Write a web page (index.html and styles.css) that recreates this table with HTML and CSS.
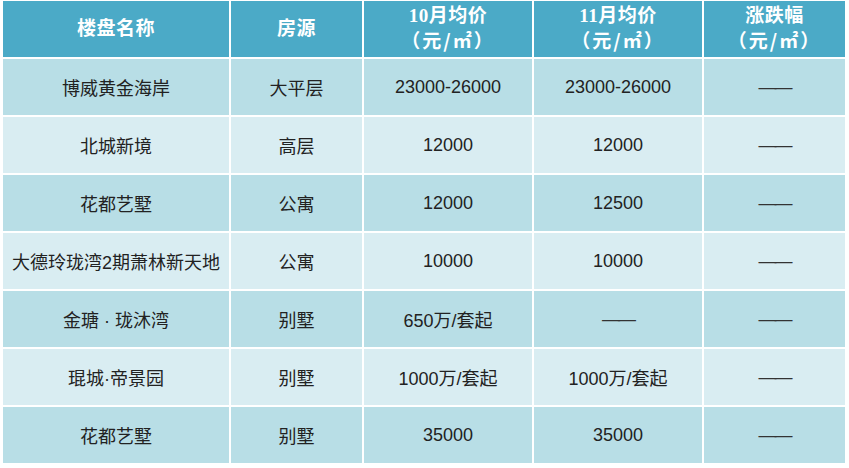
FILE: index.html
```html
<!DOCTYPE html>
<html lang="zh-CN">
<head>
<meta charset="utf-8">
<title>楼盘均价</title>
<link rel="stylesheet" href="styles.css">
</head>
<body>
<div class="wrap">
<table class="price-table">
  <colgroup>
    <col class="c1"><col class="c2"><col class="c3"><col class="c4"><col class="c5">
  </colgroup>
  <thead>
    <tr>
      <th>楼盘名称</th>
      <th>房源</th>
      <th>10月均价<br><span class="unit">（元/㎡）</span></th>
      <th>11月均价<br><span class="unit">（元/㎡）</span></th>
      <th>涨跌幅<br><span class="unit">（元/㎡）</span></th>
    </tr>
  </thead>
  <tbody>
    <tr class="dark"><td>博威黄金海岸</td><td>大平层</td><td>23000-26000</td><td>23000-26000</td><td><span class="dash">——</span></td></tr>
    <tr class="light"><td>北城新境</td><td>高层</td><td>12000</td><td>12000</td><td><span class="dash">——</span></td></tr>
    <tr class="dark"><td>花都艺墅</td><td>公寓</td><td>12000</td><td>12500</td><td><span class="dash">——</span></td></tr>
    <tr class="light"><td>大德玲珑湾2期萧林新天地</td><td>公寓</td><td>10000</td><td>10000</td><td><span class="dash">——</span></td></tr>
    <tr class="dark"><td>金瑭 · 珑沐湾</td><td>别墅</td><td>650万/套起</td><td><span class="dash">——</span></td><td><span class="dash">——</span></td></tr>
    <tr class="light"><td>琨城·帝景园</td><td>别墅</td><td>1000万/套起</td><td>1000万/套起</td><td><span class="dash">——</span></td></tr>
    <tr class="dark"><td>花都艺墅</td><td>别墅</td><td>35000</td><td>35000</td><td><span class="dash">——</span></td></tr>
  </tbody>
</table>
</div>
</body>
</html>
```

FILE: styles.css
```css
html, body {
  margin: 0;
  padding: 0;
  background: #ffffff;
}
.wrap {
  padding-left: 1px;
  margin-top: -1px;
}
.price-table {
  border-collapse: separate;
  border-spacing: 2px;
  table-layout: fixed;
  width: 846px;
  font-family: "Liberation Sans", "Noto Sans CJK SC", sans-serif;
  font-size: 18px;
  color: #222222;
}
.c1 { width: 226px; }
.c2 { width: 131px; }
.c3 { width: 168px; }
.c4 { width: 168px; }
.c5 { width: 141px; }
.price-table th {
  background: #4baac7;
  color: #ffffff;
  font-family: "Liberation Serif", "Noto Sans CJK SC", serif;
  font-weight: bold;
  font-size: 19px;
  letter-spacing: 0.5px;
  line-height: 24px;
  height: 56px;
  padding: 0;
  text-align: center;
  vertical-align: middle;
}
.unit {
  font-family: "Noto Sans CJK SC", sans-serif;
  font-weight: bold;
  font-feature-settings: "chws" 0, "halt" 0, "palt" 0;
  letter-spacing: 2px;
}
.price-table td {
  height: 56px;
  padding: 0;
  text-align: center;
  vertical-align: middle;
  white-space: nowrap;
}
.dark td { background: #b8dee6; }
.light td { background: #d9edf2; }
.dash {
  color: #333333;
  letter-spacing: -2px;
}
```
